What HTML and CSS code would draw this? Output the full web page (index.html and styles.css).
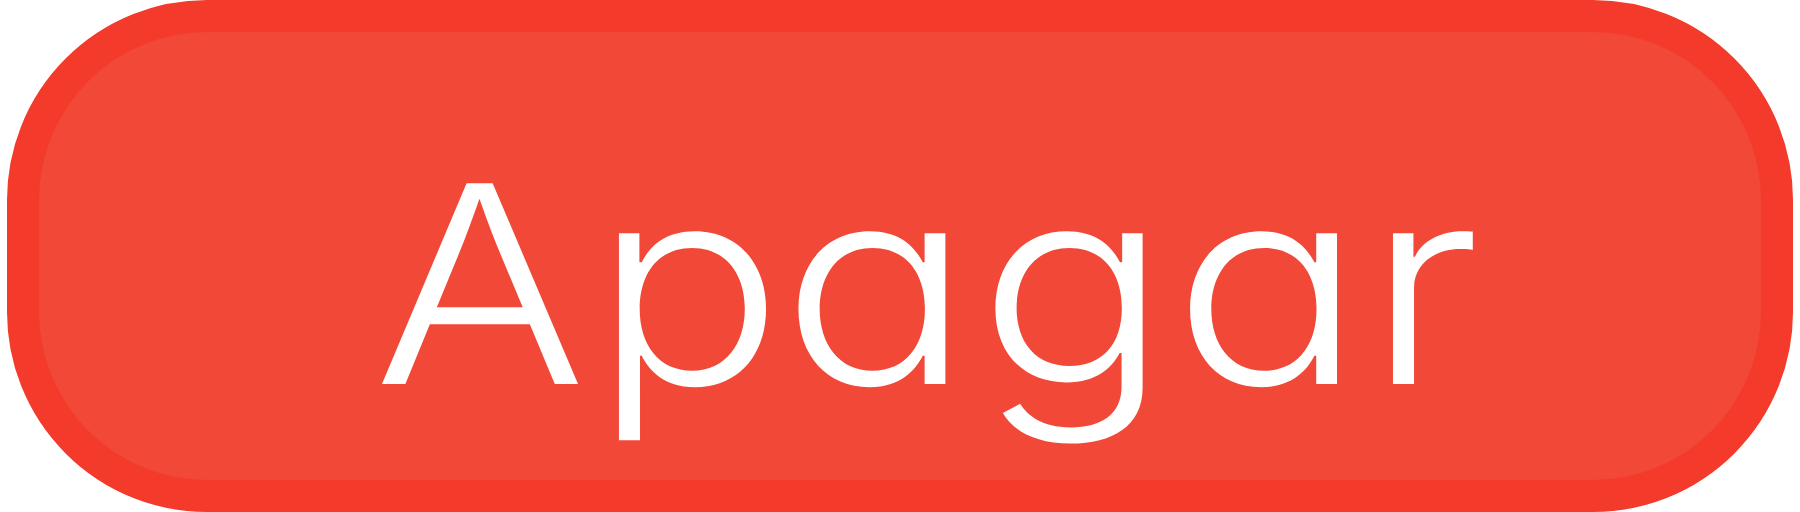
FILE: index.html
```html
<!DOCTYPE html>
<html lang="es">
<head>
<meta charset="utf-8">
<title>Apagar</title>
<link rel="stylesheet" href="styles.css">
</head>
<body>
<div class="stage">
  <button class="btn-off" type="button" aria-label="Apagar">
    <span class="label"><span class="ch c1">A</span><span class="ch c2">p</span><span class="ch c3">a</span><span class="ch c4">g</span><span class="ch c5">a</span><span class="ch c6">r</span></span>
  </button>
</div>
</body>
</html>
```

FILE: styles.css
```css
html, body {
  margin: 0;
  padding: 0;
  background: #ffffff;
}

.stage {
  width: 1800px;
  height: 512px;
  padding: 0 7px;
  box-sizing: border-box;
  display: flex;
}

.btn-off {
  width: 1786px;
  height: 512px;
  box-sizing: border-box;
  margin: 0;
  padding: 56px 0 0 336px;
  border: 32px solid #f33a2b;
  border-radius: 200px;
  background: #f14837;
  display: block;
  text-align: left;
  cursor: pointer;
  font: inherit;
  overflow: hidden;
}

.label {
  display: flex;
  color: #ffffff;
  font-family: "Inter", "DejaVu Sans", sans-serif;
  font-feature-settings: "cv11" 1;
  font-weight: 300;
  font-size: 276px;
  line-height: 276px;
  white-space: nowrap;
}

.ch {
  display: block;
  flex: none;
  text-align: center;
  transform: scaleX(1.15);
  transform-origin: 50% 50%;
}

.c1 { width: 210px; }
.c2 { width: 206px; }
.c3 { width: 171px; }
.c4 { width: 223px; }
.c5 { width: 166px; }
.c6 { width: 145px; }
```
